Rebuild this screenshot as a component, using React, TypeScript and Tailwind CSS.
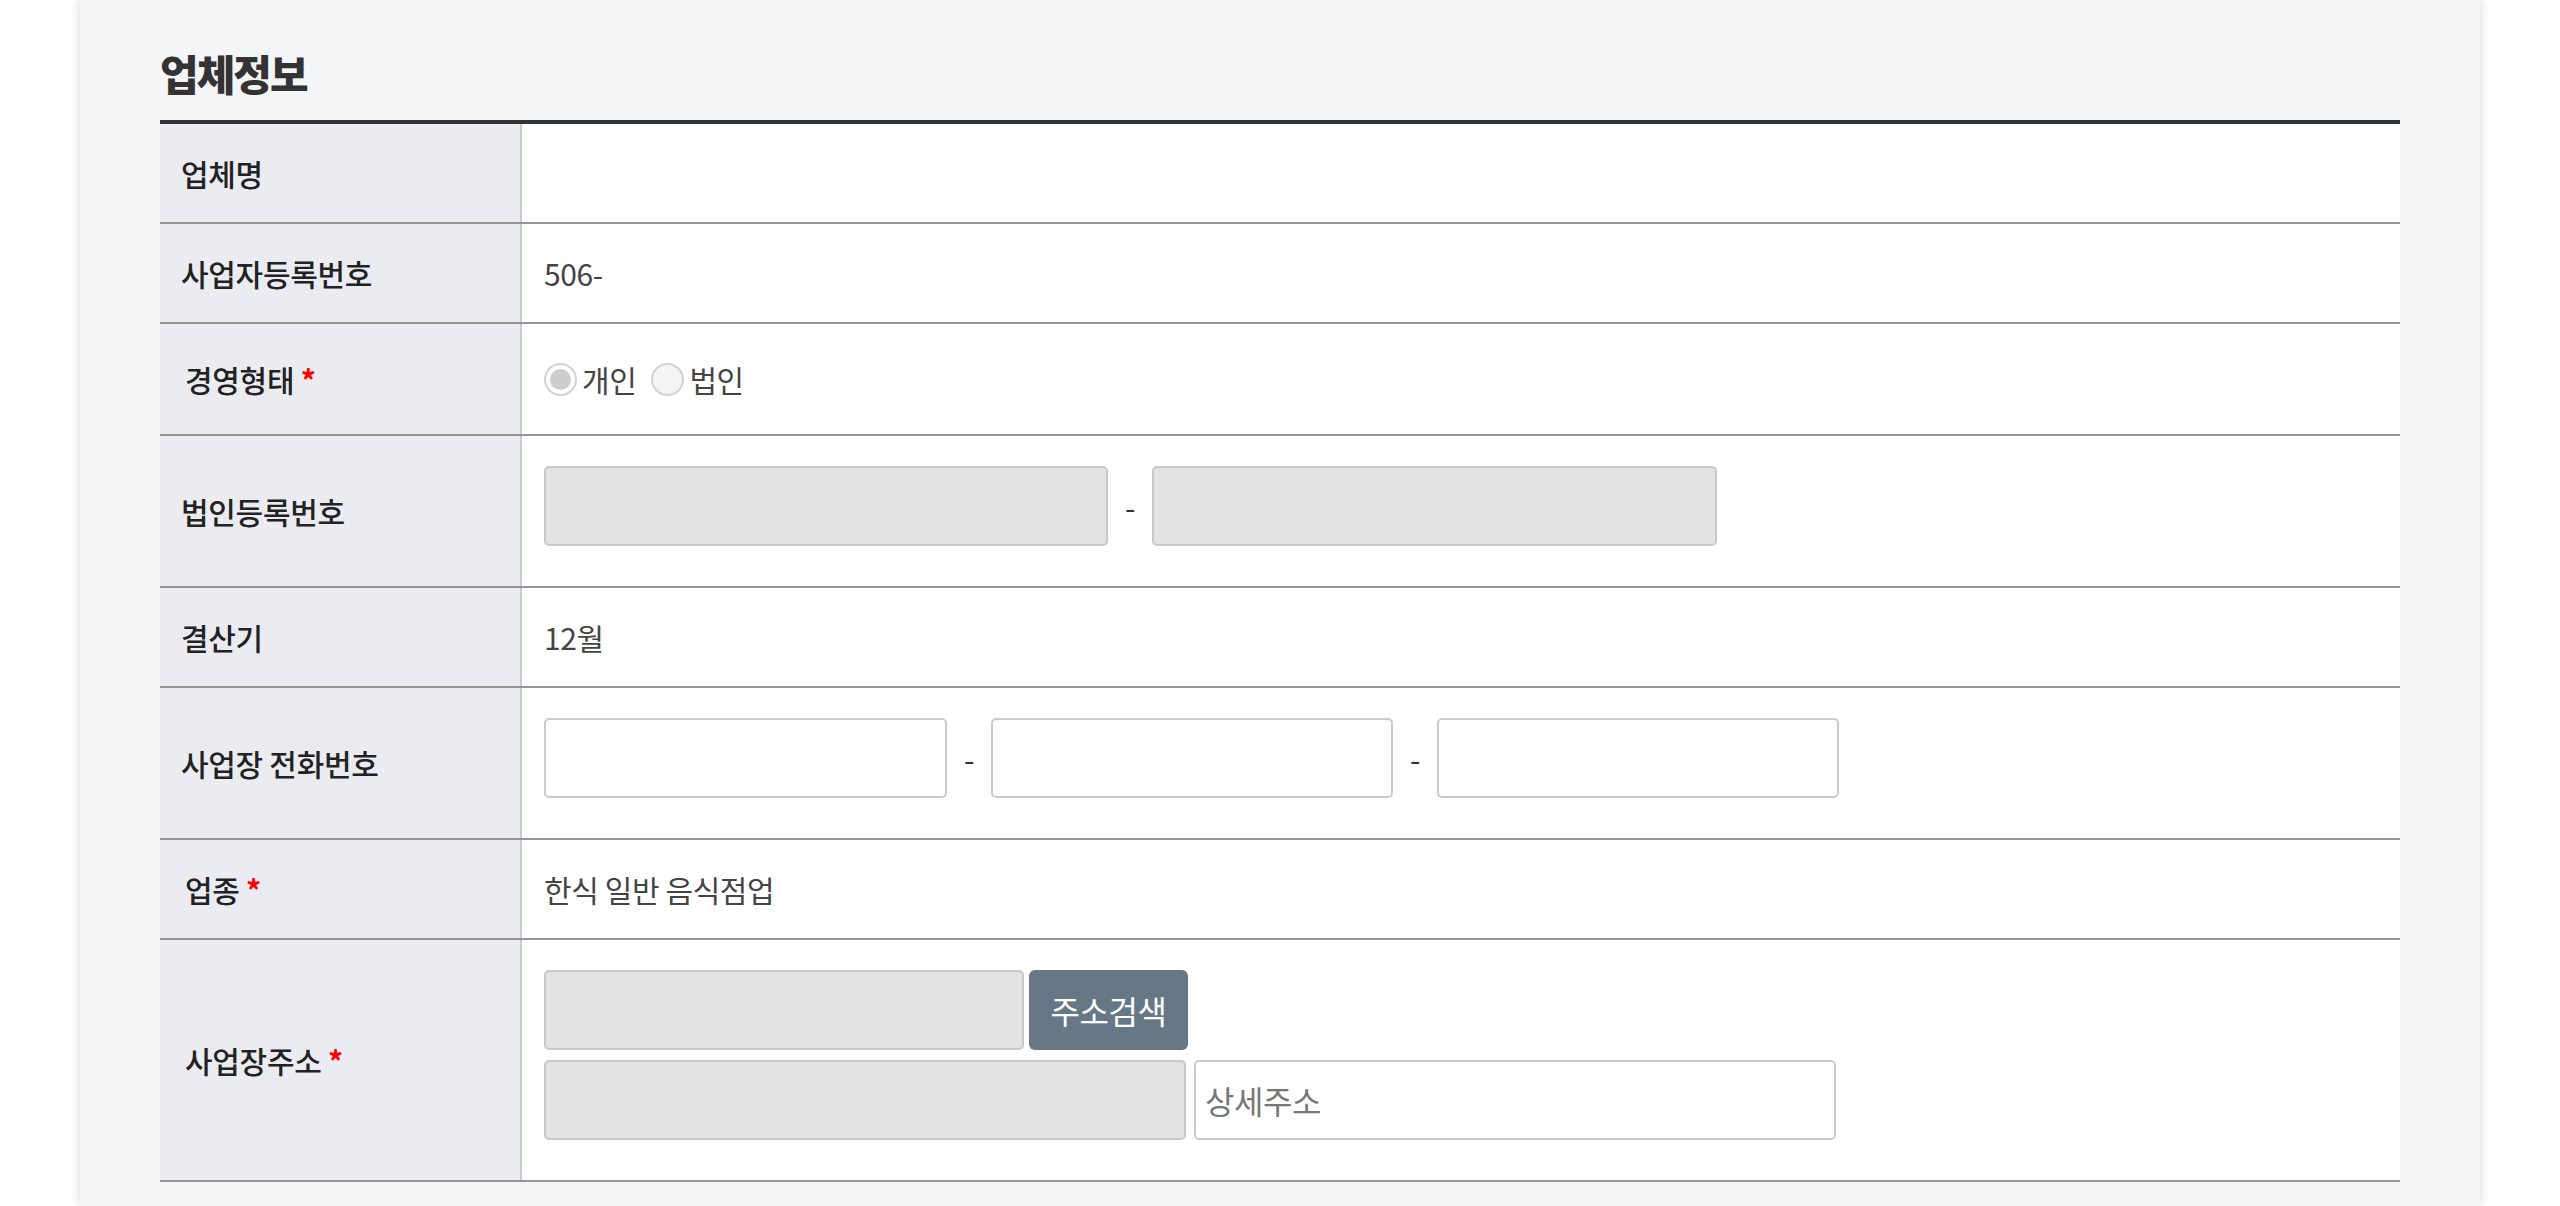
import React from "react";

function Row({
  label,
  required,
  heightClass,
  top,
  children,
}: {
  label: string;
  required?: boolean;
  heightClass: string;
  top?: boolean;
  children?: React.ReactNode;
}) {
  return (
    <div className={`flex border-b-2 border-[#959595] ${heightClass}`}>
      <div
        className={`w-[362px] shrink-0 bg-[#ebecf1] border-r-2 border-[#c9cacf] flex items-center text-[30px] font-medium text-[#222] tracking-[-0.3px] ${
          required ? "pl-[25px]" : "pl-[21px]"
        }`}
      >
        <span>
          {label}
          {required && <span className="text-[#ff0000] font-bold"> *</span>}
        </span>
      </div>
      <div
        className={`flex-1 flex pl-[22px] text-[30px] tracking-[-0.4px] text-[#444] ${
          top ? "items-start pt-[30px]" : "items-center"
        }`}
      >
        {children}
      </div>
    </div>
  );
}

function Dash() {
  return <span className="w-[44px] h-[80px] flex items-center justify-center text-[30px] text-[#333]">-</span>;
}

function Radio({ checked, label }: { checked?: boolean; label: string }) {
  return (
    <span className="flex items-center">
      <span
        className={`w-[33px] h-[33px] rounded-full border-2 border-[#d2d2d2] flex items-center justify-center ${
          checked ? "bg-white" : "bg-[#f4f4f4]"
        }`}
      >
        {checked && <span className="w-[21px] h-[21px] rounded-full bg-[#cdcdcd]" />}
      </span>
      <span className="ml-[5px] text-[30px] text-[#444]">{label}</span>
    </span>
  );
}

export default function App() {
  return (
    <div className="w-[2560px] h-[1206px] overflow-hidden bg-white font-['Noto_Sans_CJK_KR','Noto_Sans',sans-serif] text-[#333]">
      <div className="mx-auto w-[2400px] h-full bg-[#f4f5f7] shadow-[0_0_10px_rgba(0,0,0,0.16)] px-[80px]">
        <div className="h-[120px] flex items-center pt-[25px]">
          <h2 className="text-[42px] leading-none font-black tracking-[-2px] text-[#333]">업체정보</h2>
        </div>
        <div className="border-t-4 border-[#333] bg-white">
          <Row label="업체명" heightClass="h-[100px]" />
          <Row label="사업자등록번호" heightClass="h-[100px]">
            <span>506-</span>
          </Row>
          <Row label="경영형태" required heightClass="h-[112px]">
            <div className="flex items-center gap-[15px]">
              <Radio checked label="개인" />
              <Radio label="법인" />
            </div>
          </Row>
          <Row label="법인등록번호" heightClass="h-[152px]" top>
            <div className="flex items-center">
              <input readOnly className="w-[564px] h-[80px] rounded-[5px] border-2 border-[#c8c8c8] bg-[#e3e3e3] outline-none" />
              <Dash />
              <input readOnly className="w-[565px] h-[80px] rounded-[5px] border-2 border-[#c8c8c8] bg-[#e3e3e3] outline-none" />
            </div>
          </Row>
          <Row label="결산기" heightClass="h-[100px]">
            <span>12월</span>
          </Row>
          <Row label="사업장 전화번호" heightClass="h-[152px]" top>
            <div className="flex items-center">
              <input readOnly className="w-[403px] h-[80px] rounded-[5px] border-2 border-[#cbcbcb] bg-white outline-none" />
              <Dash />
              <input readOnly className="w-[402px] h-[80px] rounded-[5px] border-2 border-[#cbcbcb] bg-white outline-none" />
              <Dash />
              <input readOnly className="w-[402px] h-[80px] rounded-[5px] border-2 border-[#cbcbcb] bg-white outline-none" />
            </div>
          </Row>
          <Row label="업종" required heightClass="h-[100px]">
            <span>한식 일반 음식점업</span>
          </Row>
          <Row label="사업장주소" required heightClass="h-[242px]" top>
            <div className="flex flex-col gap-[10px]">
              <div className="flex items-center gap-[5px]">
                <input readOnly className="w-[480px] h-[80px] rounded-[5px] border-2 border-[#c8c8c8] bg-[#e3e3e3] outline-none" />
                <button className="w-[159px] h-[80px] rounded-[6px] bg-[#667785] text-white text-[32px] flex items-center justify-center">
                  주소검색
                </button>
              </div>
              <div className="flex items-center gap-[8px]">
                <input readOnly className="w-[642px] h-[80px] rounded-[5px] border-2 border-[#c8c8c8] bg-[#e3e3e3] outline-none" />
                <input
                  readOnly
                  placeholder="상세주소"
                  className="w-[642px] h-[80px] rounded-[5px] border-2 border-[#cbcbcb] bg-white outline-none px-[9px] text-[32px] text-[#444] placeholder:text-[#777]"
                />
              </div>
            </div>
          </Row>
        </div>
      </div>
    </div>
  );
}
